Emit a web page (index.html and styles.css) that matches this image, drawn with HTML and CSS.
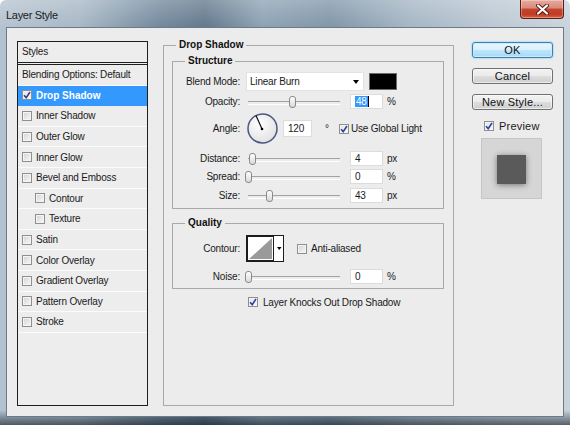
FILE: index.html
```html
<!DOCTYPE html>
<html lang="en">
<head>
    <meta charset="UTF-8">
    <title>Layer Style</title>
    <link rel="stylesheet" href="styles.css">
</head>
<body>
    <div class="window">
        <div class="titlebar">
            <span class="title">Layer Style</span>
            <div class="close-btn">
                <svg width="13" height="11" viewBox="0 0 13 11">
                    <path d="M2 1.5 L11 9.5 M11 1.5 L2 9.5" stroke="#5a1a12" stroke-width="4" stroke-linecap="round"/>
                    <path d="M2 1.5 L11 9.5 M11 1.5 L2 9.5" stroke="#fff" stroke-width="2.2" stroke-linecap="round"/>
                </svg>
            </div>
        </div>
        <div class="content">
            <div class="styles-list">
                <div class="styles-head">Styles</div>
                <div class="style-row">Blending Options: Default</div>
                <div class="style-row selected"><span class="check on"><svg width="8" height="8" viewBox="0 0 8 8"><path d="M1 4.2 L3.2 6.6 L7 1" fill="none" stroke="#2d4594" stroke-width="1.6"/></svg></span>Drop Shadow</div>
                <div class="style-row"><span class="check"></span>Inner Shadow</div>
                <div class="style-row"><span class="check"></span>Outer Glow</div>
                <div class="style-row"><span class="check"></span>Inner Glow</div>
                <div class="style-row"><span class="check"></span>Bevel and Emboss</div>
                <div class="style-row sub"><span class="check"></span>Contour</div>
                <div class="style-row sub"><span class="check"></span>Texture</div>
                <div class="style-row"><span class="check"></span>Satin</div>
                <div class="style-row"><span class="check"></span>Color Overlay</div>
                <div class="style-row"><span class="check"></span>Gradient Overlay</div>
                <div class="style-row"><span class="check"></span>Pattern Overlay</div>
                <div class="style-row"><span class="check"></span>Stroke</div>
            </div>

            <fieldset class="group main-group">
                <legend>Drop Shadow</legend>

                <fieldset class="group sub-group">
                    <legend>Structure</legend>
                    <div class="field-row blend-row">
                        <span class="field-label">Blend Mode:</span>
                        <div class="select">Linear Burn<span class="select-caret"></span></div>
                        <div class="swatch"></div>
                    </div>
                    <div class="field-row gap-1">
                        <span class="field-label">Opacity:</span>
                        <div class="slider"><span class="thumb" style="left: 48%"></span></div>
                        <div class="num"><span class="num-sel">48</span><span class="num-caret"></span></div>
                        <span class="unit">%</span>
                    </div>
                    <div class="field-row angle-row">
                        <span class="field-label">Angle:</span>
                        <svg class="dial" width="31" height="31" viewBox="0 0 31 31">
                            <defs>
                                <radialGradient id="dialFill" cx="40%" cy="35%" r="70%">
                                    <stop offset="0" stop-color="#ffffff"/>
                                    <stop offset="1" stop-color="#e0e0e0"/>
                                </radialGradient>
                            </defs>
                            <circle cx="15.5" cy="15.5" r="14.5" fill="url(#dialFill)" stroke="#4b5682" stroke-width="1.5"/>
                            <line x1="15" y1="16" x2="9" y2="2.5" stroke="#111" stroke-width="1.2"/>
                            <circle cx="15" cy="16" r="1.3" fill="#000"/>
                        </svg>
                        <div class="num angle-num">120</div>
                        <span class="deg">°</span>
                        <span class="check on global-check"><svg width="8" height="8" viewBox="0 0 8 8"><path d="M1 4.2 L3.2 6.6 L7 1" fill="none" stroke="#2d4594" stroke-width="1.6"/></svg></span>
                        <span>Use Global Light</span>
                    </div>
                    <div class="field-row gap-4">
                        <span class="field-label">Distance:</span>
                        <div class="slider"><span class="thumb" style="left: 4%"></span></div>
                        <div class="num">4</div>
                        <span class="unit">px</span>
                    </div>
                    <div class="field-row">
                        <span class="field-label">Spread:</span>
                        <div class="slider"><span class="thumb" style="left: 0%"></span></div>
                        <div class="num">0</div>
                        <span class="unit">%</span>
                    </div>
                    <div class="field-row gap-1">
                        <span class="field-label">Size:</span>
                        <div class="slider"><span class="thumb" style="left: 23%"></span></div>
                        <div class="num">43</div>
                        <span class="unit">px</span>
                    </div>
                </fieldset>

                <fieldset class="group sub-group quality">
                    <legend>Quality</legend>
                    <div class="field-row contour-row">
                        <span class="field-label">Contour:</span>
                        <svg class="contour" width="38" height="27" viewBox="0 0 38 27">
                            <rect x="0.5" y="0.5" width="37" height="26" fill="#fff" stroke="#1c1c1c"/>
                            <rect x="1.5" y="1.5" width="26" height="24" fill="#fff" stroke="#1c1c1c"/>
                            <polygon points="3,24 26,3 26,24" fill="#9a9a9a"/>
                            <polygon points="31,12 35.5,12 33.25,15" fill="#000"/>
                        </svg>
                        <span class="check aa-check"></span>
                        <span>Anti-aliased</span>
                    </div>
                    <div class="field-row noise-row">
                        <span class="field-label">Noise:</span>
                        <div class="slider"><span class="thumb" style="left: 0%"></span></div>
                        <div class="num">0</div>
                        <span class="unit">%</span>
                    </div>
                </fieldset>

                <div class="knockout">
                    <span class="check on"><svg width="8" height="8" viewBox="0 0 8 8"><path d="M1 4.2 L3.2 6.6 L7 1" fill="none" stroke="#2d4594" stroke-width="1.6"/></svg></span>
                    <span>Layer Knocks Out Drop Shadow</span>
                </div>
            </fieldset>

            <div class="side">
                <button class="btn default">OK</button>
                <button class="btn">Cancel</button>
                <button class="btn">New Style...</button>
                <div class="preview-row">
                    <span class="check on"><svg width="8" height="8" viewBox="0 0 8 8"><path d="M1 4.2 L3.2 6.6 L7 1" fill="none" stroke="#2d4594" stroke-width="1.6"/></svg></span>
                    <span>Preview</span>
                </div>
                <div class="preview-box">
                    <div class="preview-square"></div>
                </div>
            </div>
        </div>
    </div>
</body>
</html>
```

FILE: styles.css
```css
* {
    box-sizing: border-box;
}
body {
    margin: 0;
    width: 570px;
    height: 425px;
    overflow: hidden;
    background: #fff;
    font-family: "Liberation Sans", Arial, sans-serif;
}
.window {
    width: 570px;
    height: 425px;
    display: flex;
    flex-direction: column;
    border-radius: 6px 6px 0 0;
    background:
        linear-gradient(to bottom, rgba(255, 255, 255, 0.25) 0, rgba(255, 255, 255, 0) 30px, rgba(0, 0, 0, 0) 410px, rgba(10, 20, 30, 0.6) 425px),
        linear-gradient(to right, #b3c2cf 0%, #a6b6c4 14%, #6f869a 28%, #5e7589 36%, #8aa0b2 46%, #7d93a6 58%, #a3b4c3 72%, #b9c6d2 86%, #c9d3dc 100%);
}

/* title bar */
.titlebar {
    height: 27px;
    display: flex;
    align-items: center;
    justify-content: space-between;
    padding-left: 6px;
}
.title {
    font-size: 11px;
    color: #1b1b1b;
    letter-spacing: -0.3px;
    margin-top: 2px;
}
.close-btn {
    align-self: flex-start;
    width: 44px;
    height: 19px;
    margin-right: 6px;
    border: 1px solid #5a1e16;
    border-top: none;
    border-radius: 0 0 4px 4px;
    background: linear-gradient(to bottom, #e6ab9f 0%, #d88a7a 45%, #c3452d 50%, #c23a22 80%, #d8674a 100%);
    box-shadow: inset 0 0 0 1px rgba(255, 255, 255, 0.3);
    display: flex;
    align-items: center;
    justify-content: center;
}

/* dialog body */
.content {
    flex: 1;
    margin: 0 6px 8px 6px;
    border: 1px solid #6d7b89;
    background: #ececec;
    display: flex;
    align-items: stretch;
    padding: 13px 0 10px 10px;
    font-size: 10px;
    letter-spacing: -0.2px;
    color: #1a1a1a;
}

/* styles list */
.styles-list {
    width: 131px;
    flex: none;
    border: 1px solid #1f1f1f;
    background: #ededed;
}
.styles-head {
    height: 23px;
    line-height: 20px;
    padding-left: 4px;
    border-bottom: 3px double #1f1f1f;
}
.style-row {
    height: 20.6px;
    display: flex;
    align-items: center;
    padding-left: 4px;
    border-bottom: 1px solid #fbfbfb;
}
.style-row.sub {
    padding-left: 17px;
}
.style-row.selected {
    background: #3399ff;
    color: #fff;
    font-weight: bold;
    letter-spacing: 0;
    border-bottom-color: #3399ff;
}

/* checkbox */
.check {
    width: 10px;
    height: 10px;
    flex: none;
    margin-right: 4px;
    border: 1px solid #8e8f8f;
    background: linear-gradient(135deg, #cfd2d8 0%, #e9eaec 60%, #f8f8f8 100%);
    box-shadow: inset 0 0 0 1px #f4f4f4;
    display: flex;
    align-items: center;
    justify-content: center;
}
.check.on {
    background: linear-gradient(135deg, #dfe5f0 0%, #f6f8fb 100%);
}

/* group boxes */
.group {
    margin: 0;
    padding: 0;
    min-width: 0;
    border: 1px solid #a9a9a9;
}
.group > legend {
    font-weight: bold;
    font-size: 10px;
    line-height: 12px;
    letter-spacing: 0;
    padding: 0 3px;
    color: #111;
}
.main-group {
    width: 291px;
    flex: none;
    margin: -2px 0 0 15px;
    padding: 4px 9px 0 8px;
}
.main-group > legend {
    margin-left: 4px;
}
.sub-group {
    padding: 5px 0 4px 0;
}
.sub-group > legend {
    margin-left: 12px;
}
.quality {
    margin-top: 8px;
    padding: 6px 0 3px 0;
}

/* rows */
.field-row {
    height: 18px;
    display: flex;
    align-items: center;
    padding-left: 6px;
}
.field-label {
    width: 61px;
    margin-right: 6px;
    text-align: right;
    flex: none;
}
.blend-row {
    height: 19px;
}
.gap-1 {
    margin-top: 1px;
}
.gap-4 {
    margin-top: 4px;
}
.angle-row {
    height: 33px;
    margin-top: 2px;
}
.contour-row {
    height: 27px;
}
.noise-row {
    margin-top: 5px;
}

.select {
    width: 118px;
    height: 19px;
    background: #fff;
    border: 1px solid #e2e2e2;
    padding: 0 4px 0 3px;
    display: flex;
    align-items: center;
    justify-content: space-between;
}
.select-caret {
    width: 0;
    height: 0;
    border-left: 3.5px solid transparent;
    border-right: 3.5px solid transparent;
    border-top: 4px solid #000;
}
.swatch {
    width: 28px;
    height: 17px;
    margin-left: 5px;
    background: #000;
    border: 1px solid #6a6a6a;
}

.slider {
    width: 92px;
    height: 18px;
    margin-left: 2px;
    position: relative;
    flex: none;
}
.slider::before {
    content: "";
    position: absolute;
    left: 0;
    right: 0;
    top: 9px;
    height: 2px;
    border-top: 1px solid #a2a2a2;
    border-bottom: 1px solid #fff;
}
.thumb {
    position: absolute;
    top: 4px;
    width: 7px;
    height: 12px;
    margin-left: -3px;
    border: 1px solid #8a8a8a;
    border-radius: 3px;
    background: linear-gradient(to bottom, #ffffff, #d9d9d9);
}

.num {
    width: 33px;
    height: 15px;
    margin-left: 10px;
    background: #fff;
    border: 1px solid #dcdcdc;
    padding-left: 4px;
    display: flex;
    align-items: center;
}
.num-sel {
    background: #3399ff;
    color: #fff;
    padding: 0 1px;
    line-height: 11px;
}
.num-caret {
    width: 1px;
    height: 11px;
    background: #000;
}
.unit {
    margin-left: 4px;
}

.dial {
    margin-left: 1px;
    flex: none;
}
.angle-num {
    width: 29px;
    height: 17px;
    margin-left: 5px;
}
.deg {
    margin-left: 13px;
    width: 4px;
}
.global-check {
    margin-left: 10px;
    margin-right: 2px;
}
.contour {
    flex: none;
}
.aa-check {
    margin-left: 13px;
}

.knockout {
    margin-top: 6px;
    height: 14px;
    padding-left: 76px;
    display: flex;
    align-items: center;
}
.knockout .check {
    margin-right: 5px;
}

/* right column */
.side {
    width: 81px;
    margin-left: 18px;
    padding-top: 1px;
    display: flex;
    flex-direction: column;
    align-items: flex-start;
    font-size: 11px;
    letter-spacing: 0.2px;
}
.btn {
    width: 81px;
    height: 16px;
    margin: 0 0 10px 0;
    padding: 0;
    font-family: inherit;
    font-size: 11px;
    letter-spacing: 0.2px;
    line-height: 14px;
    color: #111;
    border: 1px solid #707070;
    border-radius: 3px;
    background: linear-gradient(to bottom, #f2f2f2 0%, #ebebeb 50%, #dddddd 51%, #cfcfcf 100%);
    box-shadow: inset 0 0 0 1px rgba(255, 255, 255, 0.6);
}
.btn.default {
    border-color: #3c7fb1;
    background: linear-gradient(to bottom, #eaf6fd 0%, #d9f0fc 50%, #bee6fd 51%, #a7d9f5 100%);
    box-shadow: inset 0 0 0 1px #c7ecfc, 0 0 2px #5fb9ef;
}
.preview-row {
    margin-top: 0;
    height: 12px;
    padding-left: 12px;
    display: flex;
    align-items: center;
}
.preview-row .check {
    margin-right: 5px;
}
.preview-box {
    width: 61px;
    height: 61px;
    margin: 6px 0 0 9px;
    background: #d6d6d6;
    border: 1px solid #c6c6c6;
    display: flex;
    align-items: center;
    justify-content: center;
}
.preview-square {
    width: 29px;
    height: 29px;
    margin-top: 2px;
    background: #5a5a5a;
    box-shadow: 0 1px 6px rgba(0, 0, 0, 0.45);
}
```
